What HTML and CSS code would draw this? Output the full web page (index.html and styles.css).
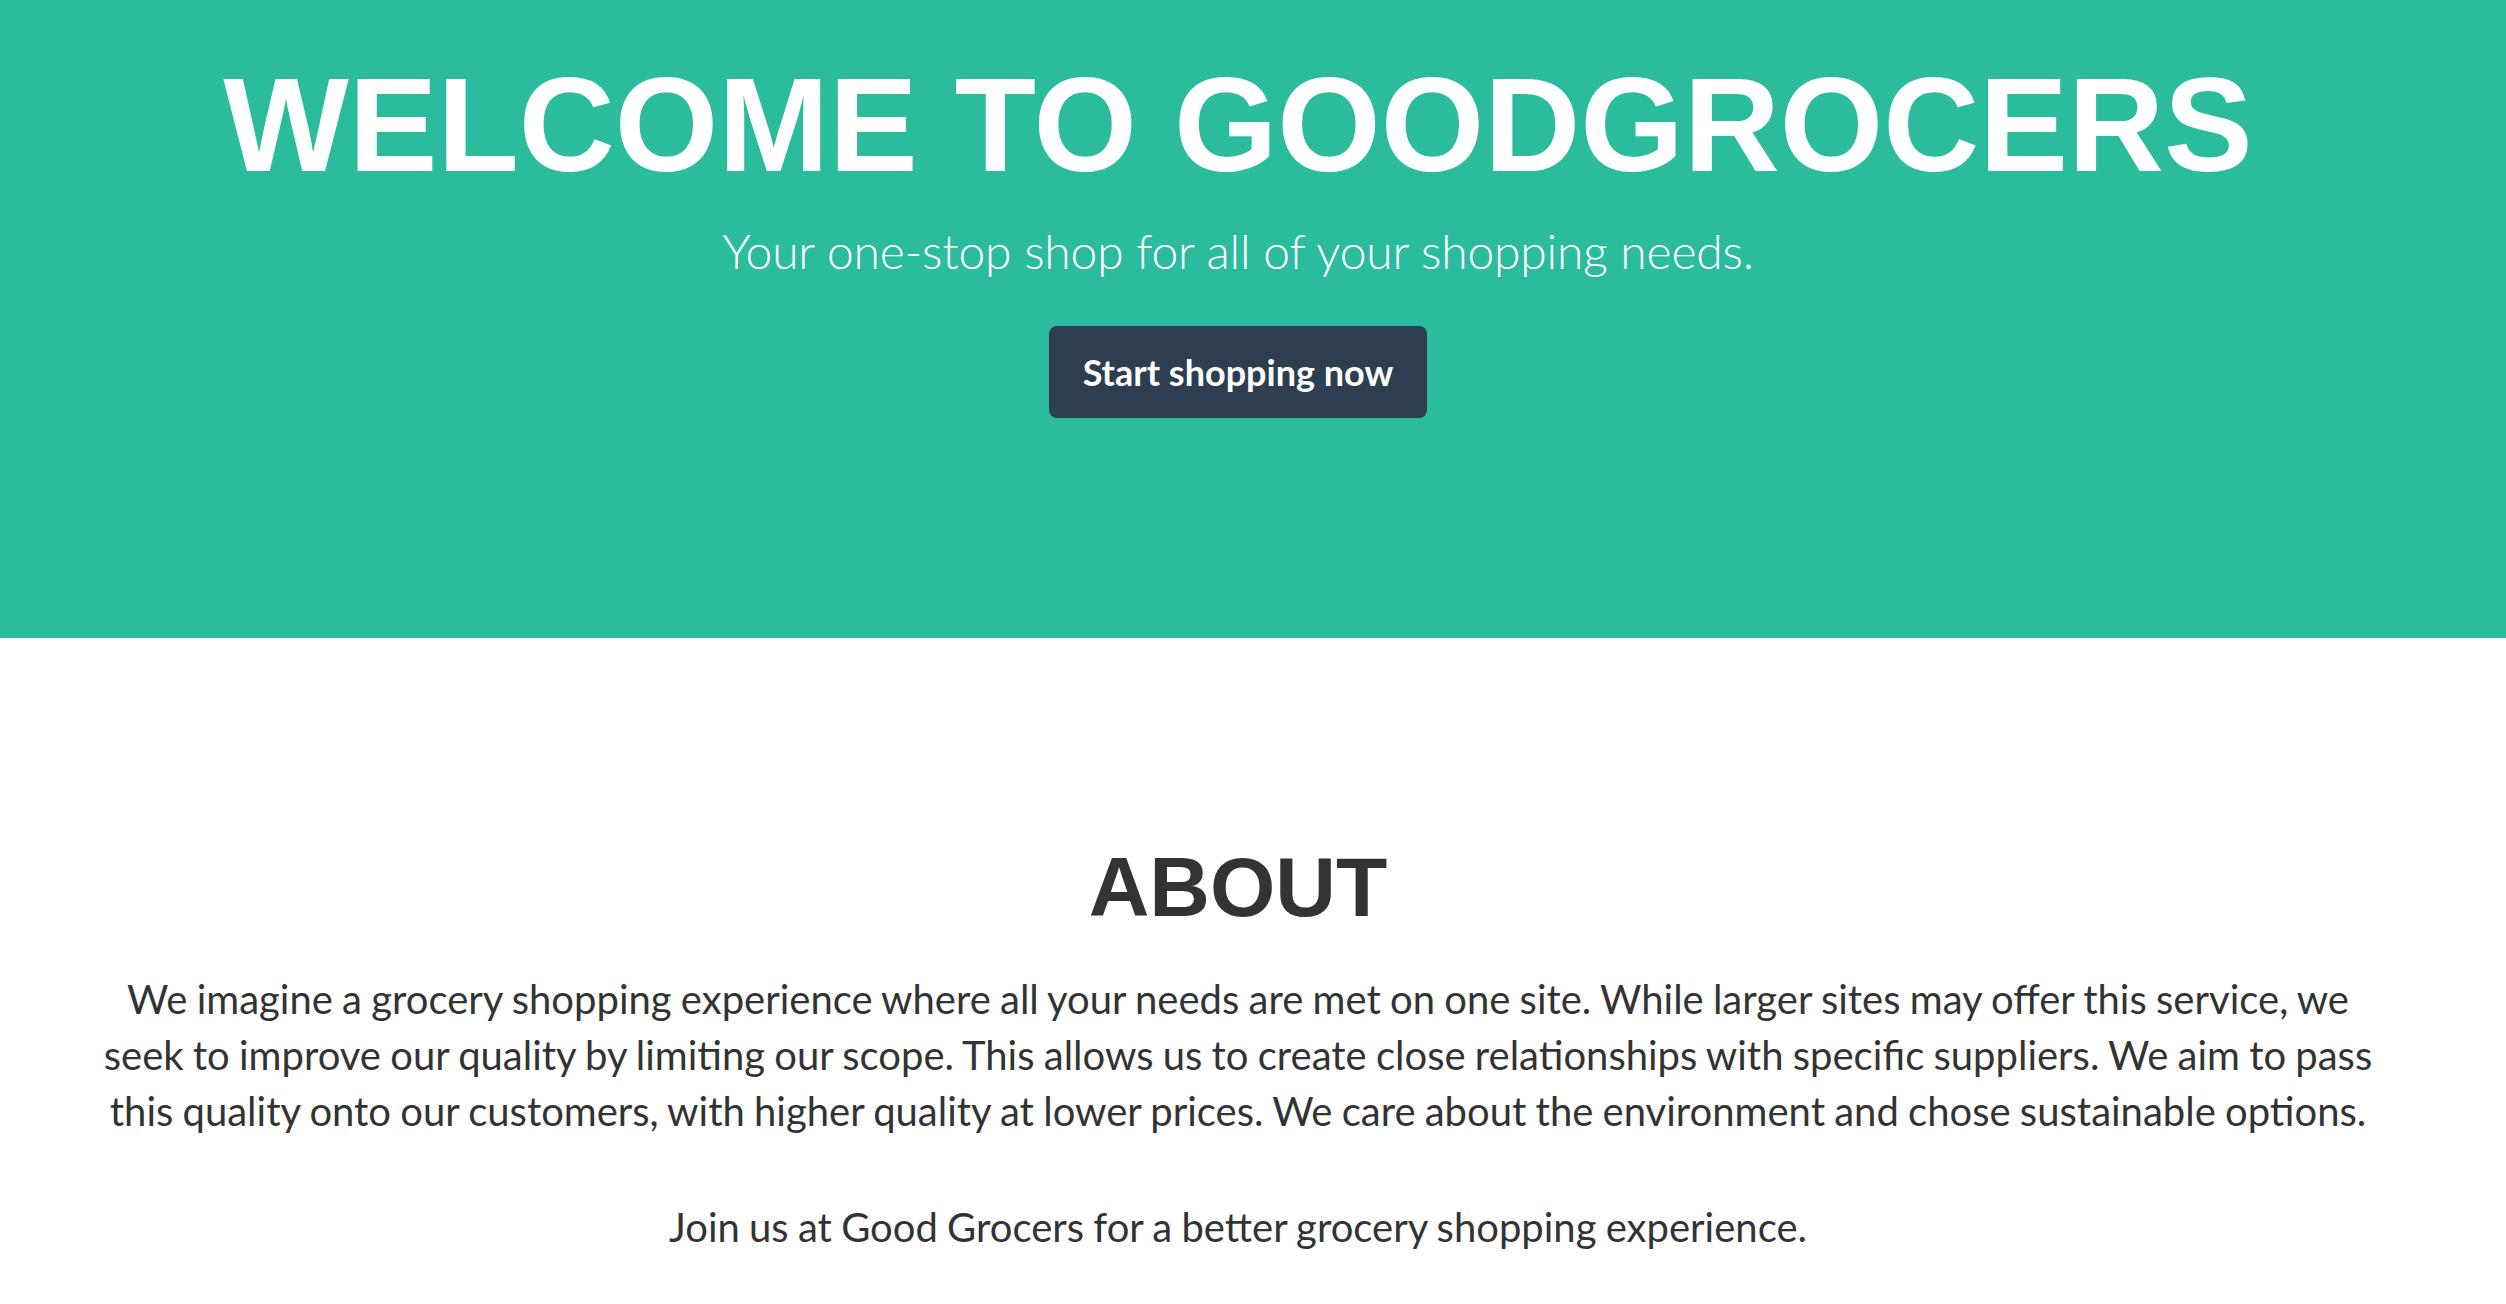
FILE: index.html
```html
<!DOCTYPE html>
<html lang="en">
<head>
<meta charset="utf-8">
<title>GoodGrocers</title>
<link rel="stylesheet" href="styles.css">
</head>
<body>
  <header class="hero">
    <h1 class="hero-title">WELCOME TO GOODGROCERS</h1>
    <p class="hero-sub">Your one-stop shop for all of your shopping needs.</p>
    <a class="hero-btn" href="#">Start shopping now</a>
  </header>
  <section class="about">
    <h2 class="about-title">ABOUT</h2>
    <p class="about-text">We imagine a grocery shopping experience where all your needs are met on one site. While larger sites may offer this service, we seek to improve our quality by limiting our scope. This allows us to create close relationships with specific suppliers. We aim to pass this quality onto our customers, with higher quality at lower prices. We care about the environment and chose sustainable options.</p>
    <p class="about-text about-join">Join us at Good Grocers for a better grocery shopping experience.</p>
  </section>
</body>
</html>
```

FILE: styles.css
```css
html, body {
  margin: 0;
  padding: 0;
  background: #ffffff;
}

body {
  font-family: "Lato", "Open Sans", sans-serif;
  color: #333333;
}

.hero {
  background: #2abc9c;
  height: 638px;
  box-sizing: border-box;
  padding: 58px 30px 0 0;
  display: flex;
  flex-direction: column;
  align-items: center;
  text-align: center;
}

.hero-title {
  margin: 0;
  font-family: "Liberation Sans", Arial, sans-serif;
  font-weight: 700;
  font-size: 133px;
  line-height: 134px;
  color: #ffffff;
}

.hero-sub {
  margin: 30px 0 0;
  font-family: "Lato", sans-serif;
  font-weight: 300;
  font-size: 48px;
  line-height: 58px;
  letter-spacing: -0.2px;
  color: #ffffff;
}

.hero-btn {
  margin-top: 46px;
  display: inline-flex;
  align-items: center;
  justify-content: center;
  box-sizing: border-box;
  height: 92px;
  width: 378px;
  background: #2d3e50;
  border-radius: 8px;
  color: #ffffff;
  font-family: "Lato", sans-serif;
  font-weight: 700;
  font-size: 36px;
  text-decoration: none;
}

.about {
  padding: 207px 30px 0 0;
  display: flex;
  flex-direction: column;
  align-items: center;
  text-align: center;
}

.about-title {
  margin: 0;
  font-family: "Liberation Sans", Arial, sans-serif;
  font-weight: 700;
  font-size: 84px;
  line-height: 84px;
  color: #333333;
}

.about-text {
  margin: 42px 0 0;
  width: 2300px;
  font-size: 40px;
  line-height: 56px;
  word-spacing: -1px;
  color: #333333;
}

.about-join {
  margin-top: 60px;
}
```
